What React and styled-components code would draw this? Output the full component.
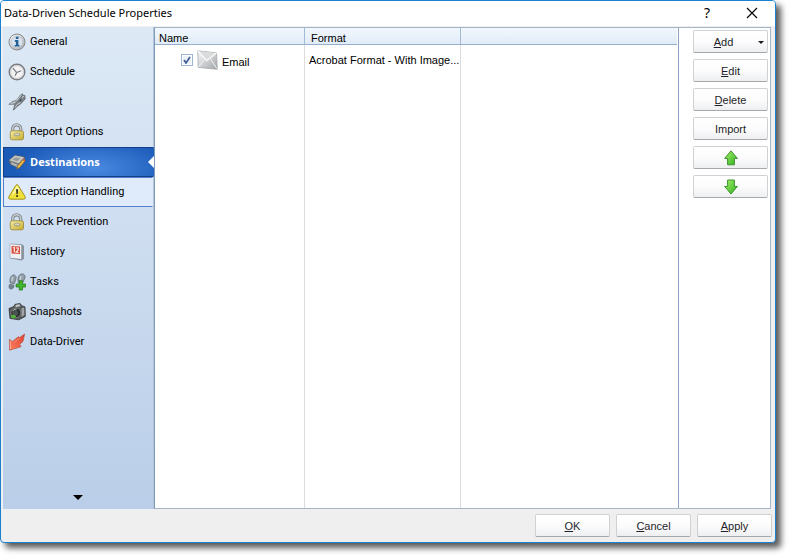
import React, { useState } from 'react'
import styled, { createGlobalStyle } from 'styled-components'


const GlobalStyle = createGlobalStyle`
* {
  box-sizing: border-box;
}
body {
  margin: 0;
  background: #ffffff;
  font-family: 'Liberation Sans', Arial, sans-serif;
  font-size: 11px;
  color: #000000;
}
`

const Window = styled.div`
display: flex;
flex-direction: column;
min-height: calc(100vh - 15px);
margin: 0 15px 15px 0;
border: 1px solid #1a80d0;
border-radius: 4px;
background: #efefef;
box-shadow: 5px 5px 6px rgba(0, 0, 0, 0.65);
overflow: hidden;
`

const TitleBar = styled.header`
display: flex;
align-items: center;
height: 25px;
padding: 0 13px 0 3px;
background: #ffffff;
`

const Title = styled.h1`
flex: 1;
margin: 0;
padding-bottom: 2px;
font-family: 'Noto Sans', sans-serif;
font-size: 11px;
font-weight: 400;
`

const TitleButton = styled.button`
display: flex;
align-items: center;
justify-content: center;
width: 20px;
height: 20px;
margin-left: 25px;
padding: 0 0 2px;
border: 0;
background: none;
font-family: 'Noto Sans', sans-serif;
font-size: 14px;
color: #000000;
`

const Body = styled.div`
display: flex;
flex: 1;
padding: 1px 4px 0 2px;
`

const Sidebar = styled.nav`
display: flex;
flex-direction: column;
width: 151px;
flex-shrink: 0;
background: linear-gradient(#dde9f5, #bacee9);
border-right: 1px solid #b4c3d6;
`

const NavItem = styled.button`
position: relative;
display: flex;
align-items: center;
gap: 4px;
height: 30px;
padding: 0 0 0 4px;
text-align: left;
font-family: ${({ $active }) => ($active ? "'Open Sans', sans-serif" : 'Roboto, sans-serif')};
font-size: 11px;
line-height: 16px;
font-weight: ${({ $active }) => ($active ? 700 : 400)};
color: ${({ $active }) => ($active ? '#ffffff' : '#000000')};
border: 1px solid transparent;
border-color: ${({ $active, $hot }) => ($active ? '#123f88' : $hot ? '#5280cf' : 'transparent')};
border-right-color: transparent;
background: ${({ $active, $hot }) =>
    $active
      ? 'radial-gradient(ellipse 80px 30px at 60% 70%, #4b8ae2, #1b5bb8) border-box'
      : $hot ? '#dfeafa' : 'none'};
margin-right: ${({ $active }) => ($active ? '-1px' : '0')};
`

const Notch = styled.span`
position: absolute;
right: -1px;
top: 8px;
border: 6px solid transparent;
border-left-width: 0;
border-right-color: #ffffff;
`

const MoreButton = styled.button`
display: flex;
justify-content: center;
margin-top: auto;
padding: 0 0 9px;
border: 0;
background: none;
`

const Content = styled.main`
display: flex;
flex: 1;
border: 1px solid #a4b6ca;
border-left-color: #7e9abb;
background: #ffffff;
`

const ListPane = styled.div`
display: grid;
flex: 1;
padding-right: 1px;
border-right: 1px solid #8ba4c3;
`

const Table = styled.table`
width: 100%;
height: 100%;
table-layout: fixed;
border-collapse: separate;
border-spacing: 0;
`

const HeadCell = styled.th`
width: ${({ $width }) => $width || 'auto'};
height: 17px;
padding: 4px 6px 0 ${({ $indent }) => $indent || '4px'};
text-align: left;
font-size: 11px;
line-height: 12px;
font-weight: 400;
background: linear-gradient(#f2f7fd, #e1ecf8);
border-right: 1px solid #a3bad5;
border-bottom: 1px solid #94afcf;
&:last-child {
  border-right: 0;
}
`

const Cell = styled.td`
height: ${({ $fill }) => ($fill ? 'auto' : '30px')};
padding: 0 0 0 4px;
font-size: 11px;
border-right: 1px solid #dcdcdc;
white-space: nowrap;
overflow: hidden;
&:last-child {
  border-right: 0;
}
`

const NameLabel = styled.label`
display: flex;
align-items: center;
padding-left: 22px;
gap: 4px;
`

const NameText = styled.span`
padding-top: 3px;
`

const CheckBox = styled.input`
appearance: none;
width: 12px;
height: 12px;
margin: 0;
border: 1px solid #9eb5d2;
background: #edf2f9;
box-shadow: inset 0 0 0 1px #ffffff;
&:checked {
  background: #edf2f9 url("data:image/svg+xml,%3Csvg xmlns='http://www.w3.org/2000/svg' viewBox='0 0 10 10'%3E%3Cpath d='M2 5l2 3 4-6' fill='none' stroke='%23415f91' stroke-width='1.7'/%3E%3C/svg%3E") center / 10px 10px;
}
`

const Actions = styled.aside`
display: flex;
flex-direction: column;
gap: 6px;
width: 91px;
flex-shrink: 0;
padding: 2px 2px 0 14px;
`

const PushButton = styled.button`
position: relative;
display: flex;
align-items: center;
justify-content: center;
width: 75px;
height: 23px;
padding: 0 ${({ $menu }) => ($menu ? '14px' : '0')} 0 0;
border: 1px solid #cfd1d4;
border-bottom-color: #a5a7aa;
border-radius: 2px;
background: linear-gradient(#ffffff, #fcfcfd 50%, #eeeff1);
font-family: 'Liberation Sans', Arial, sans-serif;
font-size: 11px;
color: #1e1e28;
`

const MenuArrow = styled.span`
position: absolute;
right: 3px;
top: 10px;
border: 3px solid transparent;
border-top-color: #1c1c1c;
border-bottom-width: 0;
`

const Footer = styled.footer`
display: flex;
justify-content: flex-end;
gap: 6px;
padding: 5px 3px 5px 0;
`


const svgProps = { width: 18, height: 18, viewBox: '0 0 18 18', 'aria-hidden': true }

// gradients shared by all the icons
const Gradients = () => (
  <svg width="0" height="0" style={{ position: 'absolute' }} aria-hidden="true">
    <defs>
      <linearGradient id="silver" x1="0" y1="0" x2="1" y2="1">
        <stop offset="0" stopColor="#fafafa" />
        <stop offset="1" stopColor="#a2a6aa" />
      </linearGradient>
      <linearGradient id="gold" x1="0" y1="0" x2="1" y2="1">
        <stop offset="0" stopColor="#f3eea8" />
        <stop offset="1" stopColor="#c9ac26" />
      </linearGradient>
      <linearGradient id="green" x1="0" y1="0" x2="1" y2="1">
        <stop offset="0" stopColor="#a5f268" />
        <stop offset="1" stopColor="#2fae1f" />
      </linearGradient>
      <linearGradient id="red" x1="1" y1="0" x2="0" y2="1">
        <stop offset="0" stopColor="#d94130" />
        <stop offset="1" stopColor="#ff8060" />
      </linearGradient>
    </defs>
  </svg>
)

const InfoIcon = () => (
  <svg {...svgProps}>
    <circle cx="9" cy="9" r="8" fill="url(#silver)" stroke="#85898e" />
    <circle cx="9" cy="9" r="5.8" fill="#d9e4ee" stroke="#b1bac2" strokeWidth=".6" />
    <path d="M7.8 3.8h2.7v2.1H7.8zM6.8 7.1h3.6v4.8h1.2v1.6H6.6v-1.6h1.3V8.7H6.8z" fill="#245f96" />
  </svg>
)

const ClockIcon = () => (
  <svg {...svgProps}>
    <circle cx="9" cy="9" r="7.8" fill="#f3f3f4" stroke="#797c80" strokeWidth="1.4" />
    <circle cx="9" cy="9" r="6.4" fill="none" stroke="#c8cacc" />
    <path d="M5 5.2l3.6 4.3-1.4 3.2M8.6 9.5l4.6-1.7" fill="none" stroke="#777b80" strokeWidth="1.2" />
  </svg>
)

const ReportIcon = () => (
  <svg {...svgProps}>
    <path d="M.8 11.4L5 8.2l3.2-.6 4.6-6 1.6-.8.2 2.8-5 6.4-2 1.2z" fill="#9aa2a8" stroke="#6a7279" strokeWidth=".7" />
    <path d="M5.4 17.2L6.6 12l3-3.4 5-6.6 2.2.4.4 3.6-4.6 5-3.4 2.4z" fill="#7f878e" stroke="#535b62" strokeWidth=".7" />
    <path d="M3 10.6l4.4-1.8M8.6 7.6l4.8-5.4M7 14.4l2.4-3.2 3.2-1.6" fill="none" stroke="#d6dbde" strokeWidth=".8" />
    <circle cx="12.6" cy="7.4" r="1.2" fill="#4d555c" />
    <path d="M14 4.6l1.8-1.4" stroke="#dce1e5" strokeWidth="1" />
  </svg>
)

const LockIcon = () => (
  <svg {...svgProps}>
    <path d="M4.7 8.6V5.8a4 4 0 0 1 8 0V8.6" fill="none" stroke="#7f868c" strokeWidth="3.2" />
    <path d="M4.7 8.6V5.8a4 4 0 0 1 8 0V8.6" fill="none" stroke="#c6ccd0" strokeWidth="1.5" />
    <rect x="2.3" y="7.8" width="13.2" height="9" rx="1.8" fill="url(#gold)" stroke="#988537" strokeWidth=".8" />
    <ellipse cx="9" cy="11.6" rx="3.4" ry="1.9" fill="#a9a78c" />
    <path d="M7 11.3h4" stroke="#efe9ba" strokeWidth="1" />
  </svg>
)

const DestinationIcon = () => (
  <svg {...svgProps}>
    <path d="M1 7l6-4.8 9.6 1.6.5 4.7-6.3 6.8L1.8 11z" fill="#777b7e" stroke="#4c5963" strokeWidth=".7" />
    <path d="M1.4 7.2L7 2.6l9 1.7-5.3 6z" fill="#c9c9c4" />
    <path d="M4 6.8l3.5-2.6 5 1-3.2 3z" fill="#989b9b" />
    <path d="M3 9.7l6.6 2.6M3.4 11l5.5 2.4" stroke="#d6d6d1" strokeWidth=".8" />
    <path d="M8.8 15.9l1-2.8 5-6.3 2 1.3-5.2 6.5z" fill="#f3c446" stroke="#8b692b" strokeWidth=".7" />
    <path d="M14.7 6.8l1-.9 1.8 1.1-.7 1.2z" fill="#de5a46" />
  </svg>
)

const WarningIcon = () => (
  <svg {...svgProps}>
    <path d="M7.8 2.4q1.2-1.8 2.4 0l7 11.4q.7 2.4-1.6 2.4H2.4q-2.3 0-1.6-2.4z" fill="#efe03a" stroke="#a69422" strokeWidth="1" />
    <path d="M8.3 3.5q.7-1 1.4 0l2.5 4.3q-5 1-8.8 4.7z" fill="#fcf8a5" />
    <path d="M8 6.2h2.2l-.4 4.9H8.4z" fill="#38361c" />
    <circle cx="9.1" cy="13" r="1.1" fill="#38361c" />
  </svg>
)

const HistoryIcon = () => (
  <svg {...svgProps}>
    <path d="M2.2 1l12 .7 1.3 1.3v12.8l-2 1.3L2.2 15z" fill="#8d959e" stroke="#727b85" strokeWidth=".6" />
    <path d="M2.2 1.2l11 .7v14L2.2 14.8z" fill="#edeff2" />
    <path d="M3.6 3l8.4.5v7.6L3.6 10.6z" fill="#d94b3a" />
    <path d="M5.3 4.8l1-.4v4.8M8 5h2.2v1.8L8.1 9.2h2.5" fill="none" stroke="#ffffff" strokeWidth="1.1" />
  </svg>
)

const TasksIcon = () => (
  <svg {...svgProps}>
    <path d="M4 2.6c2.2-1.6 4.6 0 4 3L6.4 10.6 2.2 9.9C1.5 7 2.2 4 4 2.6z" fill="#95a2ab" stroke="#5c6971" strokeWidth=".8" />
    <path d="M1.6 11.4l4.2.7c.2 2-.8 4.3-3 3.9C.8 15.6.6 13.4 1.6 11.4z" fill="#778690" stroke="#56646d" strokeWidth=".7" />
    <path d="M12.2 1.4c2.8-1.3 5.2.2 4.8 3.2l-2.2 5-4.4.2C9.4 6.6 10 2.8 12.2 1.4z" fill="#95a2ab" stroke="#5c6971" strokeWidth=".8" />
    <path d="M4.4 4l-.6 4M12.8 3l-.6 4" stroke="#c6d0d7" strokeWidth="1.4" />
    <path d="M11.3 7.8h3.2V11h3.2v3h-3.2v3h-3.2v-3H8.1v-3h3.2z" fill="#42b62d" stroke="#237b1b" strokeWidth=".8" />
  </svg>
)

const CameraIcon = () => (
  <svg {...svgProps}>
    <path d="M1 5.5l4.8-2 1.3-2.2 5-.8 1.7 2.2 3.2 1.2.3 9.5-6.5 3.4L2 15.4z" fill="#555859" stroke="#333536" strokeWidth=".8" />
    <path d="M7.3 3l.7-1.2 3.4-.5 1.2 1.9-4.8 1z" fill="#bfc2c2" />
    <path d="M13.5 5.2l2.7-.6.2 7.5-2.8 2z" fill="#a0a4a4" />
    <circle cx="7.8" cy="9.8" r="5" fill="#292c2d" stroke="#8c9090" strokeWidth=".8" />
    <circle cx="7.2" cy="10" r="3" fill="#4a5250" />
    <path d="M4.6 8a4 4 0 0 1 4-2" stroke="#d5d9d9" fill="none" />
    <ellipse cx="5.4" cy="13.6" rx="2.6" ry="1.8" fill="#51b336" />
  </svg>
)

const DataIcon = () => (
  <svg {...svgProps}>
    <path d="M16.6 1L15 8.4l-3.4 3 1.6 2.2L1.6 17.2 1.4 6.4l3 2L10.6 3.6l1 1z" fill="url(#red)" stroke="#b8503e" strokeWidth=".7" />
    <path d="M2.4 8v8" fill="none" stroke="#ffac96" strokeWidth="1" />
    <path d="M5.4 9.6l6.4-4.4" fill="none" stroke="#f58a74" strokeWidth="1" />
  </svg>
)

const EnvelopeIcon = () => (
  <svg width="21" height="20" viewBox="0 0 21 20" aria-hidden="true">
    <path d="M.8.8l18.7 2.1.8 16.4L1.2 17.4z" fill="url(#silver)" stroke="#a3a6a8" strokeWidth=".8" />
    <path d="M1 1l8.7 9.7L19.4 3" fill="#d9dbdc" stroke="#f9fafa" strokeWidth="1.3" />
    <path d="M1.6 16.8l6-8M19.8 18.6l-6.5-10" stroke="#f2f3f4" strokeWidth="1" />
  </svg>
)

const ArrowIcon = ({ down }) => (
  <svg width="14" height="16" viewBox="0 0 14 16" aria-hidden="true">
    <path
      d={down ? 'M3.6 1h6.8v6.4h3L7 15 .6 7.4h3z' : 'M7 .8l6.4 7.6h-3v6.4H3.6V8.4h-3z'}
      fill="url(#green)"
      stroke="#3f9232"
      strokeWidth="1"
      strokeLinejoin="round"
    />
  </svg>
)

const CloseIcon = () => (
  <svg width="12" height="12" viewBox="0 0 12 12" aria-hidden="true">
    <path d="M1 1l10 10M11 1L1 11" stroke="#000000" strokeWidth="1.1" />
  </svg>
)


const sections = [
  { name: 'General', Icon: InfoIcon },
  { name: 'Schedule', Icon: ClockIcon },
  { name: 'Report', Icon: ReportIcon },
  { name: 'Report Options', Icon: LockIcon },
  { name: 'Destinations', Icon: DestinationIcon },
  { name: 'Exception Handling', Icon: WarningIcon },
  { name: 'Lock Prevention', Icon: LockIcon },
  { name: 'History', Icon: HistoryIcon },
  { name: 'Tasks', Icon: TasksIcon },
  { name: 'Snapshots', Icon: CameraIcon },
  { name: 'Data-Driver', Icon: DataIcon },
]


const App = () => {
  const [active, setActive] = useState('Destinations')
  const [hot, setHot] = useState('Exception Handling')
  const [checked, setChecked] = useState(true)

  return (
    <>
      <GlobalStyle />
      <Gradients />
      <Window>
        <TitleBar>
          <Title>Data-Driven Schedule Properties</Title>
          <TitleButton type="button">?</TitleButton>
          <TitleButton type="button" aria-label="Close"><CloseIcon /></TitleButton>
        </TitleBar>
        <Body>
          <Sidebar>
            {sections.map(({ name, Icon }) => (
              <NavItem
                key={name}
                type="button"
                $active={name === active}
                $hot={name === hot}
                onClick={() => setActive(name)}
                onMouseEnter={() => setHot(name)}
              >
                <Icon />
                {name}
                {name === active && <Notch />}
              </NavItem>
            ))}
            <MoreButton type="button" aria-label="More">
              <svg width="10" height="5" viewBox="0 0 10 5"><path d="M0 0h10L5 5z" /></svg>
            </MoreButton>
          </Sidebar>
          <Content>
            <ListPane>
              <Table>
                <thead>
                  <tr>
                    <HeadCell $width="150px">Name</HeadCell>
                    <HeadCell $width="156px" $indent="6px">Format</HeadCell>
                    <HeadCell />
                  </tr>
                </thead>
                <tbody>
                  <tr>
                    <Cell>
                      <NameLabel>
                        <CheckBox type="checkbox" checked={checked} onChange={() => setChecked(!checked)} />
                        <EnvelopeIcon />
                        <NameText>Email</NameText>
                      </NameLabel>
                    </Cell>
                    <Cell>Acrobat Format - With Image...</Cell>
                    <Cell />
                  </tr>
                  <tr>
                    <Cell $fill />
                    <Cell $fill />
                    <Cell $fill />
                  </tr>
                </tbody>
              </Table>
            </ListPane>
            <Actions>
              <PushButton type="button" $menu><span><u>A</u>dd</span><MenuArrow /></PushButton>
              <PushButton type="button"><span><u>E</u>dit</span></PushButton>
              <PushButton type="button"><span><u>D</u>elete</span></PushButton>
              <PushButton type="button">Import</PushButton>
              <PushButton type="button" aria-label="Move up"><ArrowIcon /></PushButton>
              <PushButton type="button" aria-label="Move down"><ArrowIcon down /></PushButton>
            </Actions>
          </Content>
        </Body>
        <Footer>
          <PushButton type="button"><span><u>O</u>K</span></PushButton>
          <PushButton type="button"><span><u>C</u>ancel</span></PushButton>
          <PushButton type="button"><span><u>A</u>pply</span></PushButton>
        </Footer>
      </Window>
    </>
  )
}

export default App
